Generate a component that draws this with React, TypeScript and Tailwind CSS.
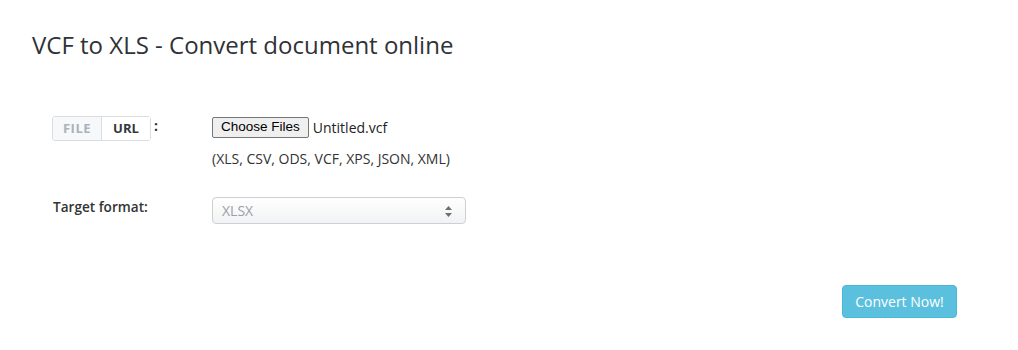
const font = { fontFamily: '"Open Sans", "Liberation Sans", sans-serif' };

const App = () => {
  return (
    <div className="w-[1018px] h-[350px] bg-white text-[#333]" style={font}>
      <div className="pl-[32px] pt-[28px]">
        <h1 className="text-[24px] leading-[34px] font-normal text-[#2f3237]">
          VCF to XLS - Convert document online
        </h1>
      </div>

      <div className="mt-[54px] pl-[52px]">
        <div className="flex">
          <div className="w-[160px] flex items-start">
            <div className="flex h-[25px] border border-[#dadde1] rounded-[3px] text-[13px] font-bold leading-none">
              <span className="w-[49px] flex items-center justify-center bg-[#f7f8f9] text-[#abb2bb] tracking-[0.5px] border-r border-[#dadde1] rounded-l-[3px]">
                FILE
              </span>
              <span className="w-[48px] flex items-center justify-center bg-white text-[#303840]">
                URL
              </span>
            </div>
            <span className="ml-[3px] text-[14px] font-bold leading-[20px]">:</span>
          </div>
          <div className="flex flex-col">
            <div className="flex items-center h-[22px]">
              <button
                className="h-[21px] px-[8px] bg-[#efefef] border border-[#767676] rounded-[2px] text-[13.5px] text-black leading-none"
                style={{ fontFamily: '"Liberation Sans", Arial, sans-serif' }}
              >
                Choose Files
              </button>
              <span className="ml-[4px] text-[14px] text-[#222]">Untitled.vcf</span>
            </div>
            <div className="mt-[10px] text-[14px] text-[#333]">
              (XLS, CSV, ODS, VCF, XPS, JSON, XML)
            </div>
          </div>
        </div>

        <div className="flex items-center mt-[28px]">
          <div className="w-[160px] text-[13.6px] font-semibold text-[#333] pl-[1px] -mt-[6px]">
            Target format:
          </div>
          <div className="relative w-[254px] h-[27px] border border-[#ccd0d4] rounded-[4px] bg-gradient-to-b from-white to-[#f1f2f3] flex items-center pl-[9px]">
            <span className="text-[14px] text-[#9aa0a6]">XLSX</span>
            <svg className="absolute right-[13px] top-[8px]" width="7" height="11" viewBox="0 0 7 11">
              <path d="M3.5 0 L7 4 L0 4 Z" fill="#6b7075" />
              <path d="M3.5 11 L7 7 L0 7 Z" fill="#6b7075" />
            </svg>
          </div>
        </div>
      </div>

      <div className="flex justify-end pr-[61px] mt-[61px]">
        <button className="h-[33px] w-[115px] bg-[#5bc0de] border border-[#46b8da] rounded-[4px] text-white text-[14px]">
          Convert Now!
        </button>
      </div>
    </div>
  );
};

export default App;
